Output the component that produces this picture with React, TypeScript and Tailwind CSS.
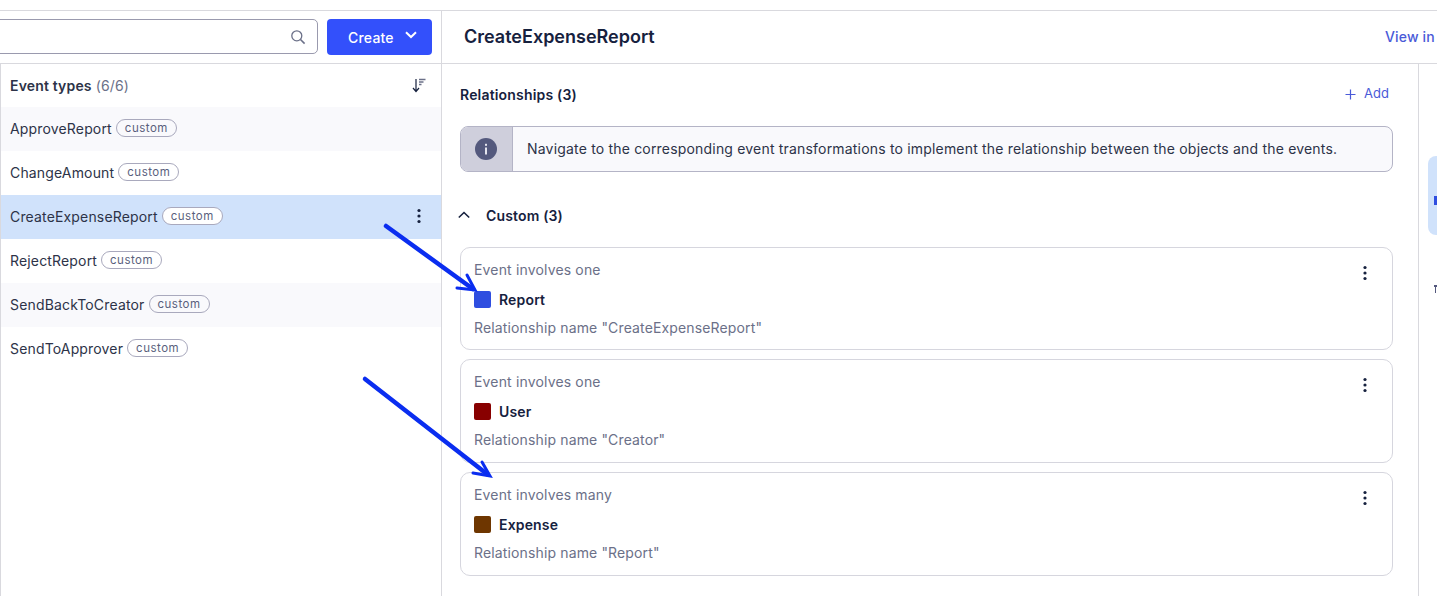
import React from "react";

const font = { fontFamily: "Inter, 'Liberation Sans', sans-serif" };

function Kebab({ className = "" }: { className?: string }) {
  return (
    <svg width="4" height="16" viewBox="0 0 4 16" className={className}>
      <circle cx="2" cy="2.5" r="1.6" fill="#16213e" />
      <circle cx="2" cy="8" r="1.6" fill="#16213e" />
      <circle cx="2" cy="13.5" r="1.6" fill="#16213e" />
    </svg>
  );
}

const events = [
  { name: "ApproveReport", tone: "bg-[#f9f9fc]" },
  { name: "ChangeAmount", tone: "bg-white" },
  { name: "CreateExpenseReport", tone: "bg-[#d0e2fb]", active: true },
  { name: "RejectReport", tone: "bg-white" },
  { name: "SendBackToCreator", tone: "bg-[#f9f9fc]" },
  { name: "SendToApprover", tone: "bg-white" },
];

function EventRow({ name, tone, active }: { name: string; tone: string; active?: boolean }) {
  return (
    <div className={`h-11 flex items-center pl-[9px] pr-[20px] pb-[2px] ${tone}`}>
      <span className="text-[14px] tracking-[0.16px] text-[#2d3348]">{name}</span>
      <span
        className={`ml-1 h-[18px] px-2 rounded-full border border-[#a9a9bd] text-[11.5px] leading-[16px] tracking-[0.5px] text-[#5a5f7d] ${
          active ? "bg-white" : ""
        }`}
      >
        custom
      </span>
      {active && <Kebab className="ml-auto" />}
    </div>
  );
}

function RelCard({
  head,
  color,
  title,
  rel,
  h,
}: {
  head: string;
  color: string;
  title: string;
  rel: string;
  h: string;
}) {
  return (
    <div className={`${h} relative rounded-[10px] border border-[#d6d6de] pl-[13px] pt-[12px]`}>
      <div className="text-[14px] leading-[20px] tracking-[0.16px] text-[#6b7088]">{head}</div>
      <div className="mt-[10px] flex items-center h-[18px]">
        <span className="w-[17px] h-[17px] rounded-[2px]" style={{ backgroundColor: color }} />
        <span className="ml-2 text-[14px] tracking-[0.16px] font-semibold text-[#16213e]">{title}</span>
      </div>
      <div className="mt-[10px] text-[14px] leading-[20px] tracking-[0.14px] text-[#6b7088]">{rel}</div>
      <Kebab className="absolute right-[25px] top-[17px]" />
    </div>
  );
}

export default function App() {
  return (
    <div className="relative w-[1437px] h-[596px] overflow-hidden bg-white" style={font}>
      <div className="h-[10px]" />
      <div className="border-t border-[#d9d9de] h-[54px] border-b flex">
        <div className="w-[441px] flex items-start pt-[8px] justify-end pr-[9px] gap-[9px] shrink-0">
          <div className="flex-1 h-[35px] -ml-2 rounded-[5px] border border-[#9a9aae] flex items-center justify-end pr-[11px]">
            <svg width="16" height="16" viewBox="0 0 16 16" fill="none" stroke="#6b7088" strokeWidth="1.3">
              <circle cx="6.8" cy="6.8" r="5" />
              <path d="M10.5 10.5 L14.6 14.6" strokeWidth="1.6" />
            </svg>
          </div>
          <button className="w-[105px] h-9 rounded-[4px] bg-[#3350fb] text-white text-[14px] tracking-[0.2px] font-medium flex items-center pl-[21px]">
            Create
            <svg width="12" height="8" viewBox="0 0 12 8" fill="none" stroke="white" strokeWidth="2" className="ml-[11px] -mt-1">
              <path d="M1 1.2 L6 6 L11 1.2" />
            </svg>
          </button>
        </div>
        <div className="flex-1 border-l border-[#d9d9de] flex items-start pt-[13px] pl-[22px] relative">
          <span className="text-[18px] leading-[26px] font-semibold text-[#16213e]">CreateExpenseReport</span>
          <span className="absolute left-[943px] top-[15px] whitespace-nowrap text-[14px] leading-[22px] tracking-[0.16px] font-medium text-[#4a5ad8]">View in</span>
        </div>
      </div>
      <div className="flex h-[532px]">
        <div className="w-[442px] shrink-0 border-l border-r border-[#d9d9de]">
          <div className="h-[43px] flex items-center pl-[9px] pr-[15px]">
            <span className="text-[14px] tracking-[0.16px] font-semibold text-[#2d3348]">Event types</span>
            <span className="ml-1 text-[14px] tracking-[0.16px] text-[#6b7088]">(6/6)</span>
            <svg width="14" height="15" viewBox="0 0 14 15" fill="none" className="ml-auto">
              <path d="M4 1 V13 M1 10 L4 13.5 L7 10" stroke="#16213e" strokeWidth="1.2" />
              <path d="M7 1.5 H13.5 M7 4 H11.5 M7 6.5 H9.5" stroke="#6b7088" strokeWidth="1.4" />
            </svg>
          </div>
          {events.map((e) => (
            <EventRow key={e.name} {...e} />
          ))}
        </div>
        <div className="w-[977px] shrink-0 border-r border-[#d9d9de] pl-[18px] pr-[25px]">
          <div className="flex items-center h-[20px] mt-[20px]">
            <span className="text-[14px] tracking-[0.18px] font-semibold text-[#16213e]">Relationships (3)</span>
            <span className="ml-auto mr-[4px] flex items-center gap-[8px] text-[13px] text-[#4a5ad8]">
              <svg width="11" height="11" viewBox="0 0 11 11" stroke="#4a5ad8" strokeWidth="1.2">
                <path d="M5.5 0.5 V10.5 M0.5 5.5 H10.5" />
              </svg>
              Add
            </span>
          </div>
          <div className="mt-[22px] h-[46px] rounded-[8px] border border-[#b4b4c6] bg-[#f9f9fc] flex overflow-hidden">
            <div className="w-[52px] bg-[#cfcfdc] border-r border-[#b4b4c6] flex items-center justify-center pr-[2px]">
              <svg width="22" height="22" viewBox="0 0 22 22">
                <circle cx="11" cy="11" r="11" fill="#54597d" />
                <rect x="10" y="9.5" width="2" height="7" fill="#e5e5ee" />
                <rect x="10" y="5.8" width="2" height="2" fill="#e5e5ee" />
              </svg>
            </div>
            <div className="flex items-center pl-[14px] pb-[2px] text-[14px] tracking-[0.186px] text-[#2d3348]">
              Navigate to the corresponding event transformations to implement the relationship between the objects and the events.
            </div>
          </div>
          <div className="mt-[33px] flex items-center h-5">
            <svg width="12" height="8" viewBox="0 0 12 8" fill="none" stroke="#16213e" strokeWidth="1.6" className="-mt-px -ml-[2px]">
              <path d="M0.8 6.5 L6 1.5 L11.2 6.5" />
            </svg>
            <span className="ml-[16px] text-[14px] tracking-[0.16px] font-semibold text-[#16213e]">Custom (3)</span>
          </div>
          <div className="mt-[22px] flex flex-col gap-[9px]">
            <RelCard h="h-[103px]" head="Event involves one" color="#2f4ee0" title="Report" rel={'Relationship name "CreateExpenseReport"'} />
            <RelCard h="h-[104px]" head="Event involves one" color="#880000" title="User" rel={'Relationship name "Creator"'} />
            <RelCard h="h-[104px]" head="Event involves many" color="#6e3600" title="Expense" rel={'Relationship name "Report"'} />
          </div>
        </div>
        <div className="flex-1 relative">
          <div className="absolute left-[9px] top-[92px] w-[20px] h-[79px] rounded-l-[8px] bg-[#d0e2fb]" />
          <div className="absolute left-[15px] top-[132px] w-[4px] h-[9px] bg-[#2f4ee0]" />
          <div className="absolute left-[15px] top-[221px] w-[3px] h-[2px] bg-[#54597d]" />
          <div className="absolute left-[16px] top-[221px] w-[1px] h-[8px] bg-[#54597d]" />
        </div>
      </div>
      <svg className="absolute left-0 top-0 pointer-events-none" width="1437" height="596" fill="none" stroke="#0a2df0" strokeLinecap="round">
        <path d="M386 226 L473 289" strokeWidth="4.5" />
        <path d="M467 275 L475 290 L457 288" strokeWidth="3" />
        <path d="M365 379 L487 474" strokeWidth="4.5" />
        <path d="M482 462 L490 476 L473 473" strokeWidth="3" />
      </svg>
    </div>
  );
}
